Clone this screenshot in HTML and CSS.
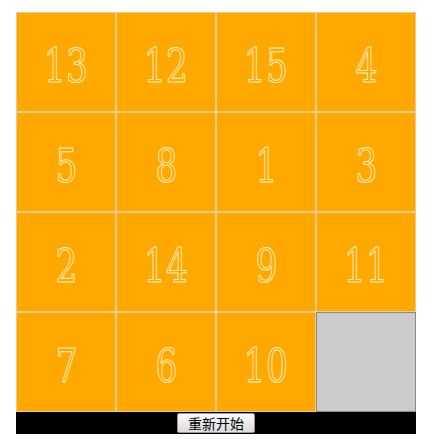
FILE: index.html
```html
<!DOCTYPE html>
<html lang="en">
  <head>
    <meta charset="UTF-8" />
    <meta name="viewport" content="width=device-width, initial-scale=1.0" />
    <title>数字华容道</title>
    <link rel="stylesheet" href="styles.css">
  </head>
  <body>
    <div class="game">
      <div class="board" id="board"></div>
      <div class="bar">
        <button id="restart">重新开始</button>
      </div>
    </div>

    <script>
      let tiles = [13, 12, 15, 4, 5, 8, 1, 3, 2, 14, 9, 11, 7, 6, 10, 0];

      function draw() {
        let board = document.getElementById("board");
        board.innerHTML = "";
        tiles.forEach((n, i) => {
          let cell = document.createElement("div");
          cell.className = n === 0 ? "cell empty" : "cell";
          if (n !== 0) {
            let num = document.createElement("span");
            num.className = "num";
            num.textContent = n;
            cell.appendChild(num);
          }
          cell.addEventListener("click", () => move(i));
          board.appendChild(cell);
        });
      }

      function move(i) {
        let e = tiles.indexOf(0);
        let near =
          (Math.abs(i - e) === 1 && Math.floor(i / 4) === Math.floor(e / 4)) ||
          Math.abs(i - e) === 4;
        if (near) {
          tiles[e] = tiles[i];
          tiles[i] = 0;
          draw();
        }
      }

      function shuffle() {
        for (let k = 0; k < 300; k++) {
          let e = tiles.indexOf(0);
          let opts = [e - 4, e + 4];
          if (e % 4 > 0) opts.push(e - 1);
          if (e % 4 < 3) opts.push(e + 1);
          opts = opts.filter((x) => x >= 0 && x < 16);
          let pick = opts[Math.floor(Math.random() * opts.length)];
          tiles[e] = tiles[pick];
          tiles[pick] = 0;
        }
        draw();
      }

      document.getElementById("restart").addEventListener("click", shuffle);

      draw();
    </script>
  </body>
</html>
```

FILE: styles.css
```css
body {
  margin: 0;
  padding: 12px 16px;
  background-color: #fff;
}
.game {
  width: 400px;
}
.board {
  display: grid;
  grid-template-columns: repeat(4, 100px);
  grid-template-rows: repeat(4, 100px);
}
.cell {
  box-sizing: border-box;
  border: 1px solid #ecca90;
  background-color: #ffa800;
  display: flex;
  justify-content: center;
  align-items: center;
  padding-top: 6px;
  cursor: pointer;
  user-select: none;
}
.num {
  display: inline-block;
  font-family: "DejaVu Serif", serif;
  font-stretch: condensed;
  font-size: 47px;
  color: transparent;
  -webkit-text-stroke: 1px #fff0c8;
  transform: scaleX(0.82);
}
.empty {
  background-color: #cbcbcb;
  border-color: #8a8a8a;
  cursor: default;
}
.bar {
  background-color: #000;
  height: 22px;
  display: flex;
  justify-content: center;
  align-items: center;
}
.bar button {
  font-family: "Noto Sans CJK SC", sans-serif;
  font-size: 14px;
  line-height: 16px;
  padding: 1px 10px;
  height: 20px;
  background: linear-gradient(#fafafa, #dcdcdc);
  border: 1px solid #999;
  border-radius: 2px;
  color: #000;
}
```
